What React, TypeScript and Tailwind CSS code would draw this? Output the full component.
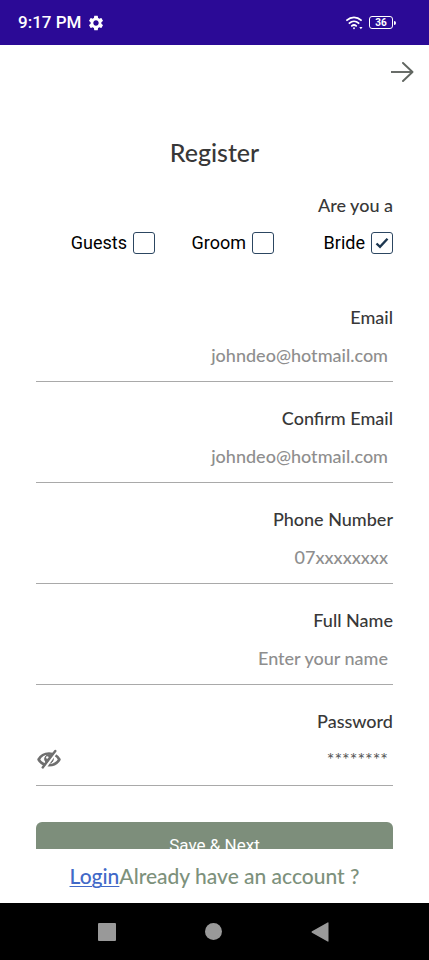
import React, { useState } from 'react';
import { MdSettings } from 'react-icons/md';

const roles = ['Guests', 'Groom', 'Bride'];

const fields = [
  { id: 'email', label: 'Email', type: 'email', placeholder: 'johndeo@hotmail.com' },
  { id: 'confirm-email', label: 'Confirm Email', type: 'email', placeholder: 'johndeo@hotmail.com' },
  { id: 'phone', label: 'Phone Number', type: 'tel', placeholder: '07xxxxxxxx' },
  { id: 'full-name', label: 'Full Name', type: 'text', placeholder: 'Enter your name' },
];

const StatusBar: React.FC = () => (
  <div className="flex h-[45px] shrink-0 items-center justify-between bg-[#2b0a96] pl-[18px] pr-[33px] text-white">
    <div className="flex items-center gap-1.5 font-[Roboto,sans-serif] text-[17px] font-medium">
      <span>9:17 PM</span>
      <MdSettings className="size-[18px]" />
    </div>
    <div className="flex items-center gap-1.5">
      <svg className="h-[14px] w-[17px]" viewBox="0 0 17 14" fill="none" stroke="currentColor" strokeWidth="1.8" strokeLinecap="round">
        <path d="M1 4.2C5 .3 11 .3 15 4.2" />
        <path d="M3.4 7.200c2.700-2.500 6.500-2.500 9.200 0" />
        <path d="M5.800 9.900c1.400-1.200 3-1.200 4.400 0" />
        <path d="M8 12.200v.1" />
        <path d="M13.300 11h3.200l-1.600 2.200z" fill="currentColor" stroke="none" />
      </svg>
      <div className="flex items-center gap-px">
        <div className="flex h-[13px] w-6 items-center justify-center rounded-[3px] border border-white font-[Roboto,sans-serif] text-[10px] font-bold leading-none">
          36
        </div>
        <div className="h-1 w-[2px] rounded-r-sm bg-white" />
      </div>
    </div>
  </div>
);

const RolePicker: React.FC = () => {
  const [role, setRole] = useState('Bride');

  return (
    <fieldset className="mt-6">
      <legend className="ml-auto text-lg font-medium leading-6">Are you a</legend>
      <div className="mt-3 grid grid-cols-3 font-[Roboto,sans-serif] text-lg text-black">
        {roles.map((name) => (
          <label key={name} className="flex items-center justify-end gap-1.5">
            {name}
            <span className="grid place-items-center">
              <input
                type="checkbox"
                checked={role === name}
                onChange={() => setRole(name)}
                className="col-start-1 row-start-1 size-[22px] appearance-none rounded-[3px] border border-[#2c4661] bg-white"
              />
              {role === name && (
                <svg className="pointer-events-none col-start-1 row-start-1 size-[14px]" viewBox="0 0 14 14" fill="none" stroke="#1d3750" strokeWidth="2.4">
                  <path d="M1.500 7.500 5 10.800 12.500 2.800" />
                </svg>
              )}
            </span>
          </label>
        ))}
      </div>
    </fieldset>
  );
};

const EyeOffIcon: React.FC = () => (
  <svg className="h-5 w-[26px]" viewBox="0 0 26 20" fill="none" stroke="#6f6f6f">
    <path d="M2.600 10.500C7 2.500 19 2.500 23.400 10.500 19 18.200 7 18.200 2.600 10.500z" strokeWidth="2.600" strokeLinejoin="round" />
    <circle cx="13" cy="10" r="4.300" fill="#6f6f6f" strokeWidth="1" />
    <circle cx="11.300" cy="8.500" r="1.300" fill="white" stroke="none" />
    <path d="M21.500 1.500 9 19" stroke="white" strokeWidth="2.400" />
    <path d="M19.300 2 6.700 18.400" strokeWidth="2.400" strokeLinecap="round" />
  </svg>
);

const inputClass =
  'h-[53px] w-full border-b border-[#a9a9a9] bg-transparent pr-[5px] text-right text-lg font-medium outline-none placeholder:text-[#8e8e8e]';

const App: React.FC = () => {
  const [showPassword, setShowPassword] = useState(false);

  return (
    <div className="flex h-screen flex-col bg-white font-[Lato,sans-serif] text-[#383838]">
      <StatusBar />

      <header className="flex h-[54px] shrink-0 items-center justify-end pr-[15px]">
        <button type="button" aria-label="Back">
          <svg className="h-5 w-6" viewBox="0 0 24 20" fill="none" stroke="#616661" strokeWidth="1.900">
            <path d="M1 10h21.500" />
            <path d="M13 1l9.500 9L13 19" strokeLinecap="round" strokeLinejoin="round" />
          </svg>
        </button>
      </header>

      <main className="min-h-0 flex-1 overflow-y-auto px-9 [scrollbar-width:none]">
        <h1 className="mt-9 text-center text-[25px] font-medium leading-[34px]">Register</h1>
        <form>
          <RolePicker />

          <div className="mt-12 flex flex-col gap-6">
            {fields.map((field) => (
              <div key={field.id}>
                <label htmlFor={field.id} className="block text-right text-lg font-medium leading-6">
                  {field.label}
                </label>
                <input id={field.id} type={field.type} placeholder={field.placeholder} className={inputClass} />
              </div>
            ))}

            <div>
              <label htmlFor="password" className="block text-right text-lg font-medium leading-6">
                Password
              </label>
              <div className="flex items-center border-b border-[#a9a9a9]">
                <button type="button" aria-label="Show password" onClick={() => setShowPassword(!showPassword)}>
                  <EyeOffIcon />
                </button>
                <input
                  id="password"
                  type={showPassword ? 'text' : 'password'}
                  placeholder="********"
                  className="h-[52px] min-w-0 flex-1 bg-transparent pr-[5px] text-right text-lg outline-none placeholder:text-[#555555]"
                />
              </div>
            </div>
          </div>

          <button
            type="submit"
            className="mt-9 h-12 w-full rounded-md bg-[#7d8e7b] font-[Roboto,sans-serif] text-[17px] text-white"
          >
            Save &amp; Next
          </button>
        </form>
      </main>

      <footer className="flex h-[54px] shrink-0 items-center justify-center text-[21px] font-medium text-[#7d917c]">
        <a href="#login" className="text-[#4169c8] underline decoration-1 underline-offset-2">Login</a>
        <span>Already have an account ?</span>
      </footer>

      <nav className="flex h-[57px] shrink-0 items-center justify-center gap-[89px] bg-black pr-[2px] text-[#999999]">
        <button type="button" aria-label="Recent apps" className="size-[18px] rounded-[1px] bg-current" />
        <button type="button" aria-label="Home" className="size-[17px] rounded-full bg-current" />
        <button type="button" aria-label="Back">
          <svg className="h-5 w-[18px]" viewBox="0 0 18 20" fill="currentColor">
            <path d="M17.500 1v18a.6.6 0 0 1-.9.500L1 10.700a.8.8 0 0 1 0-1.400L16.600.5a.6.6 0 0 1 .9.500z" />
          </svg>
        </button>
      </nav>
    </div>
  );
};

export default App;
